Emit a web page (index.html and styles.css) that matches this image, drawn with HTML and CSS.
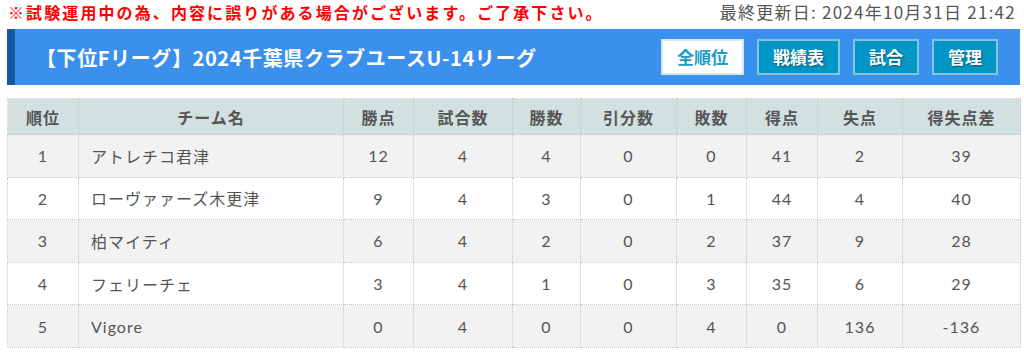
FILE: index.html
```html
<!DOCTYPE html>
<html lang="ja">
<head>
<meta charset="utf-8">
<title>2024千葉県クラブユースU-14リーグ</title>
<link rel="stylesheet" href="styles.css">
</head>
<body>
<div class="page">
  <div class="topline">
    <p class="notice">※試験運用中の為、内容に誤りがある場合がございます。ご了承下さい。</p>
    <p class="updated">最終更新日: 2024年10月31日 21:42</p>
  </div>
  <div class="titlebar">
    <h1 class="title">【下位Fリーグ】2024千葉県クラブユースU-14リーグ</h1>
    <nav class="tabs">
      <a class="tab tab-active">全順位</a>
      <a class="tab">戦績表</a>
      <a class="tab">試合</a>
      <a class="tab">管理</a>
    </nav>
  </div>
  <table class="standings">
    <colgroup>
      <col class="c-rank"><col class="c-team"><col class="c-pts"><col class="c-played"><col class="c-win"><col class="c-draw"><col class="c-lose"><col class="c-gf"><col class="c-ga"><col class="c-gd">
    </colgroup>
    <thead>
      <tr><th>順位</th><th>チーム名</th><th>勝点</th><th>試合数</th><th>勝数</th><th>引分数</th><th>敗数</th><th>得点</th><th>失点</th><th>得失点差</th></tr>
    </thead>
    <tbody>
      <tr><td>1</td><td class="team">アトレチコ君津</td><td>12</td><td>4</td><td>4</td><td>0</td><td>0</td><td>41</td><td>2</td><td>39</td></tr>
      <tr><td>2</td><td class="team">ローヴァァーズ木更津</td><td>9</td><td>4</td><td>3</td><td>0</td><td>1</td><td>44</td><td>4</td><td>40</td></tr>
      <tr><td>3</td><td class="team">柏マイティ</td><td>6</td><td>4</td><td>2</td><td>0</td><td>2</td><td>37</td><td>9</td><td>28</td></tr>
      <tr><td>4</td><td class="team">フェリーチェ</td><td>3</td><td>4</td><td>1</td><td>0</td><td>3</td><td>35</td><td>6</td><td>29</td></tr>
      <tr><td>5</td><td class="team">Vigore</td><td>0</td><td>4</td><td>0</td><td>0</td><td>4</td><td>0</td><td>136</td><td>-136</td></tr>
    </tbody>
  </table>
</div>
</body>
</html>
```
FILE: styles.css
```css
html, body {
  margin: 0;
  padding: 0;
  background: #fff;
}
body {
  font-family: Lato, "Noto Sans CJK JP", sans-serif;
  color: #555;
}
.page {
  margin-left: 7px;
  width: 1013px;
}
.topline {
  display: flex;
  justify-content: space-between;
  align-items: center;
  height: 24px;
}
.notice {
  margin: 0 0 0 1px;
  color: #f00;
  font-family: "Noto Sans CJK JP", sans-serif;
  font-weight: bold;
  font-size: 16px;
  letter-spacing: 2.1px;
  line-height: 22px;
}
.updated {
  margin: 0 4px 0 0;
  color: #555;
  font-family: "Noto Sans CJK JP", sans-serif;
  font-size: 17px;
  letter-spacing: 1.25px;
  line-height: 22px;
}
.titlebar {
  margin-top: 5px;
  height: 56px;
  background: #3a90ec;
  border-left: 8px solid #1558a0;
  display: flex;
  align-items: center;
  justify-content: space-between;
  box-sizing: border-box;
  padding: 0 22px 0 21px;
}
.title {
  margin: 0;
  color: #fff;
  font-family: "Noto Sans CJK JP", sans-serif;
  font-weight: bold;
  font-size: 20px;
  letter-spacing: 0.6px;
}
.tabs {
  display: flex;
  gap: 13px;
}
.tab {
  display: block;
  box-sizing: border-box;
  height: 36px;
  line-height: 32px;
  padding: 0 14px;
  border: 2px solid #86c3e2;
  background: #0097c7;
  color: #fff;
  font-family: "Noto Sans CJK JP", sans-serif;
  font-weight: bold;
  font-size: 17px;
  text-shadow: 1px 1px 2px rgba(0, 0, 0, 0.45);
}
.tab-active {
  background: #fff;
  color: #1a9bc8;
  border-color: #d6e8f5;
  text-shadow: none;
}
.standings {
  margin-top: 13px;
  width: 1013px;
  table-layout: fixed;
  border-collapse: collapse;
  border: 1px dotted #c8c8c8;
  font-size: 16px;
}
.c-rank { width: 71px; }
.c-team { width: 265px; }
.c-pts { width: 70px; }
.c-played { width: 99px; }
.c-win { width: 68px; }
.c-draw { width: 96px; }
.c-lose { width: 70px; }
.c-gf { width: 71px; }
.c-ga { width: 85px; }
.c-gd { width: 118px; }
.standings th,
.standings td {
  border: 1px dotted #c8c8c8;
  text-align: center;
  padding: 0;
}
.standings th {
  height: 35px;
  background: #d3e0e0;
  font-weight: bold;
  color: #555;
  letter-spacing: 1px;
}
.standings td {
  height: 41.6px;
  color: #555;
  letter-spacing: 1px;
}
.standings tbody tr:nth-child(odd) td {
  background: #f2f2f2;
}
.standings td.team {
  text-align: left;
  padding-left: 12px;
}
```
